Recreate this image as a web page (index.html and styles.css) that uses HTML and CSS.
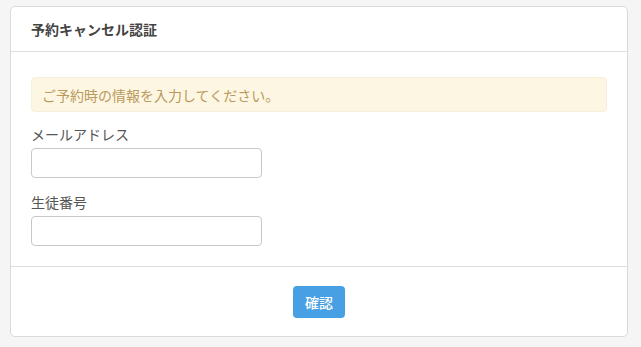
FILE: index.html
```html
<!DOCTYPE html>
<html lang="ja">
<head>
<meta charset="utf-8">
<link rel="stylesheet" href="styles.css">
</head>
<body>
<div class="card">
  <div class="card-header">予約キャンセル認証</div>
  <div class="card-body">
    <div class="alert">ご予約時の情報を入力してください。</div>
    <div class="group">
      <label class="label">メールアドレス</label>
      <input class="input" type="text">
    </div>
    <div class="group">
      <label class="label">生徒番号</label>
      <input class="input" type="text">
    </div>
  </div>
  <div class="card-footer">
    <button class="btn">確認</button>
  </div>
</div>
</body>
</html>
```
FILE: styles.css
```css
html, body {
  background: #f5f5f5;
}
body {
  margin: 6px 13px 0 10px;
  font-family: "Noto Sans CJK JP", "Noto Sans", sans-serif;
  color: #555;
}
.card {
  background: #fff;
  border: 1px solid #d9d9d9;
  border-radius: 5px;
}
.card-header {
  padding: 0 20px;
  height: 44px;
  display: flex;
  align-items: center;
  font-size: 14px;
  font-weight: bold;
  color: #444;
  border-bottom: 1px solid #ddd;
}
.card-body {
  padding: 25px 20px 20px;
}
.alert {
  background: #fdf6e3;
  border: 1px solid #f8efd8;
  border-radius: 4px;
  color: #b99a5c;
  font-size: 14px;
  height: 33px;
  display: flex;
  align-items: center;
  padding: 0 10px;
  margin-bottom: 12px;
}
.group {
  display: flex;
  flex-direction: column;
  align-items: flex-start;
}
.group + .group {
  margin-top: 14px;
}
.label {
  font-size: 14px;
  color: #555;
  line-height: 20px;
  margin-bottom: 4px;
}
.input {
  width: 231px;
  height: 30px;
  box-sizing: border-box;
  border: 1px solid #c8c8c8;
  border-radius: 4px;
  background: #fff;
  margin: 0;
}
.card-footer {
  border-top: 1px solid #ddd;
  height: 69px;
  display: flex;
  align-items: center;
  justify-content: center;
}
.btn {
  background: #47a0e3;
  color: #fff;
  border: none;
  border-radius: 4px;
  width: 52px;
  height: 32px;
  font-family: "Noto Sans CJK JP", sans-serif;
  font-size: 14px;
  font-weight: 500;
  padding: 0;
}
```
